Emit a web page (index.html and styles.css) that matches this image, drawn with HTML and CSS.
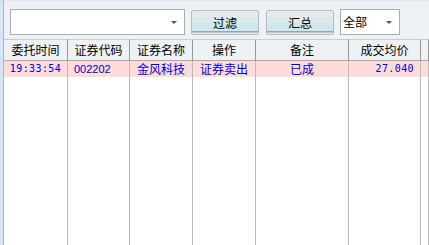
FILE: index.html
```html
<!DOCTYPE html>
<html lang="zh">
<head>
    <meta charset="UTF-8">
    <title>委托查询</title>
    <link rel="stylesheet" href="styles.css">
</head>
<body>
    <div class="side-strip"></div>
    <div class="panel">
        <div class="toolbar">
            <div class="combo combo-wide"><span class="combo-text"></span><span class="arrow"></span></div>
            <button class="btn">过滤</button>
            <button class="btn">汇总</button>
            <div class="combo combo-small"><span class="combo-text">全部</span><span class="arrow"></span></div>
        </div>

        <div class="grid">
            <div class="cell head">委托时间</div>
            <div class="cell head">证券代码</div>
            <div class="cell head">证券名称</div>
            <div class="cell head">操作</div>
            <div class="cell head">备注</div>
            <div class="cell head">成交均价</div>
            <div class="cell head"></div>

            <div class="cell row mono center">19:33:54</div>
            <div class="cell row code">002202</div>
            <div class="cell row center">金风科技</div>
            <div class="cell row center">证券卖出</div>
            <div class="cell row center">已成</div>
            <div class="cell row mono right">27.040</div>
            <div class="cell row"></div>

            <div class="cell fill"></div>
            <div class="cell fill"></div>
            <div class="cell fill"></div>
            <div class="cell fill"></div>
            <div class="cell fill"></div>
            <div class="cell fill"></div>
            <div class="cell fill"></div>
        </div>
    </div>
</body>
</html>
```

FILE: styles.css
```css
:root {
    --bar-bg: #eef2f5;
    --line: #b9b9b9;
    --pink: #ffdcdc;
    --blue: #0000c8;
}

body {
    margin: 0;
    height: 245px;
    display: flex;
    overflow: hidden;
    font-family: "Noto Sans CJK SC", "Liberation Sans", sans-serif;
    font-size: 12px;
    color: #000;
    background: #fff;
}

.side-strip {
    width: 3px;
    background: #d5e5f7;
    border-right: 1px solid #a3b7cf;
}

.panel {
    flex: 1;
    display: flex;
    flex-direction: column;
}

.toolbar {
    height: 39px;
    box-sizing: border-box;
    padding: 9px 0 0 6px;
    background: var(--bar-bg);
    border-top: 1px solid #dbe6f1;
    display: flex;
    align-items: flex-start;
}

.combo {
    height: 26px;
    box-sizing: border-box;
    margin-top: -1px;
    background: #fff;
    border: 1px solid #a5acb3;
    display: flex;
    align-items: center;
    justify-content: space-between;
    padding: 0 7px 0 2px;
}

.combo-wide {
    width: 175px;
}

.combo-small {
    width: 60px;
    margin-left: 6px;
}

.combo-text {
    font-size: 12px;
    line-height: 1;
}

.arrow {
    width: 0;
    height: 0;
    border-left: 3px solid transparent;
    border-right: 3px solid transparent;
    border-top: 3px solid #555;
}

.btn {
    width: 68px;
    height: 25px;
    margin-left: 6px;
    padding: 0;
    box-sizing: border-box;
    border: 1px solid #b5bcc2;
    border-radius: 2px;
    font-family: "Noto Sans CJK SC", sans-serif;
    font-size: 12px;
    color: #000;
    background: linear-gradient(#e4eaef 0%, #e1e8ec 50%, #cfe8ef 52%, #cfe8ef 86%, #9aa4aa 87%, #9aa4aa 93%, #e6eef2 94%);
}

.btn + .btn {
    margin-left: 7px;
}

.grid {
    flex: 1;
    display: grid;
    grid-template-columns: 64px 62px 63px 63px 93px 72px 1fr;
    grid-template-rows: 22px 16px 1fr;
}

.cell {
    box-sizing: border-box;
    border-right: 1px solid var(--line);
    white-space: nowrap;
    overflow: hidden;
}

.head {
    background: var(--bar-bg);
    border-top: 1px solid #c8ccd0;
    border-bottom: 1px solid #a8a8a8;
    border-right-color: #9a9a9a;
    text-align: center;
    line-height: 19px;
}

.row {
    background: var(--pink);
    color: var(--blue);
    line-height: 16px;
}

.center {
    text-align: center;
}

.right {
    text-align: right;
    padding-right: 6px;
}

.mono {
    font-family: "DejaVu Sans Mono", monospace;
    font-size: 10px;
    letter-spacing: 0.4px;
}

.code {
    font-family: "Liberation Sans", sans-serif;
    font-size: 11px;
    padding-left: 6px;
}

.fill {
    background: #fff;
}
```
